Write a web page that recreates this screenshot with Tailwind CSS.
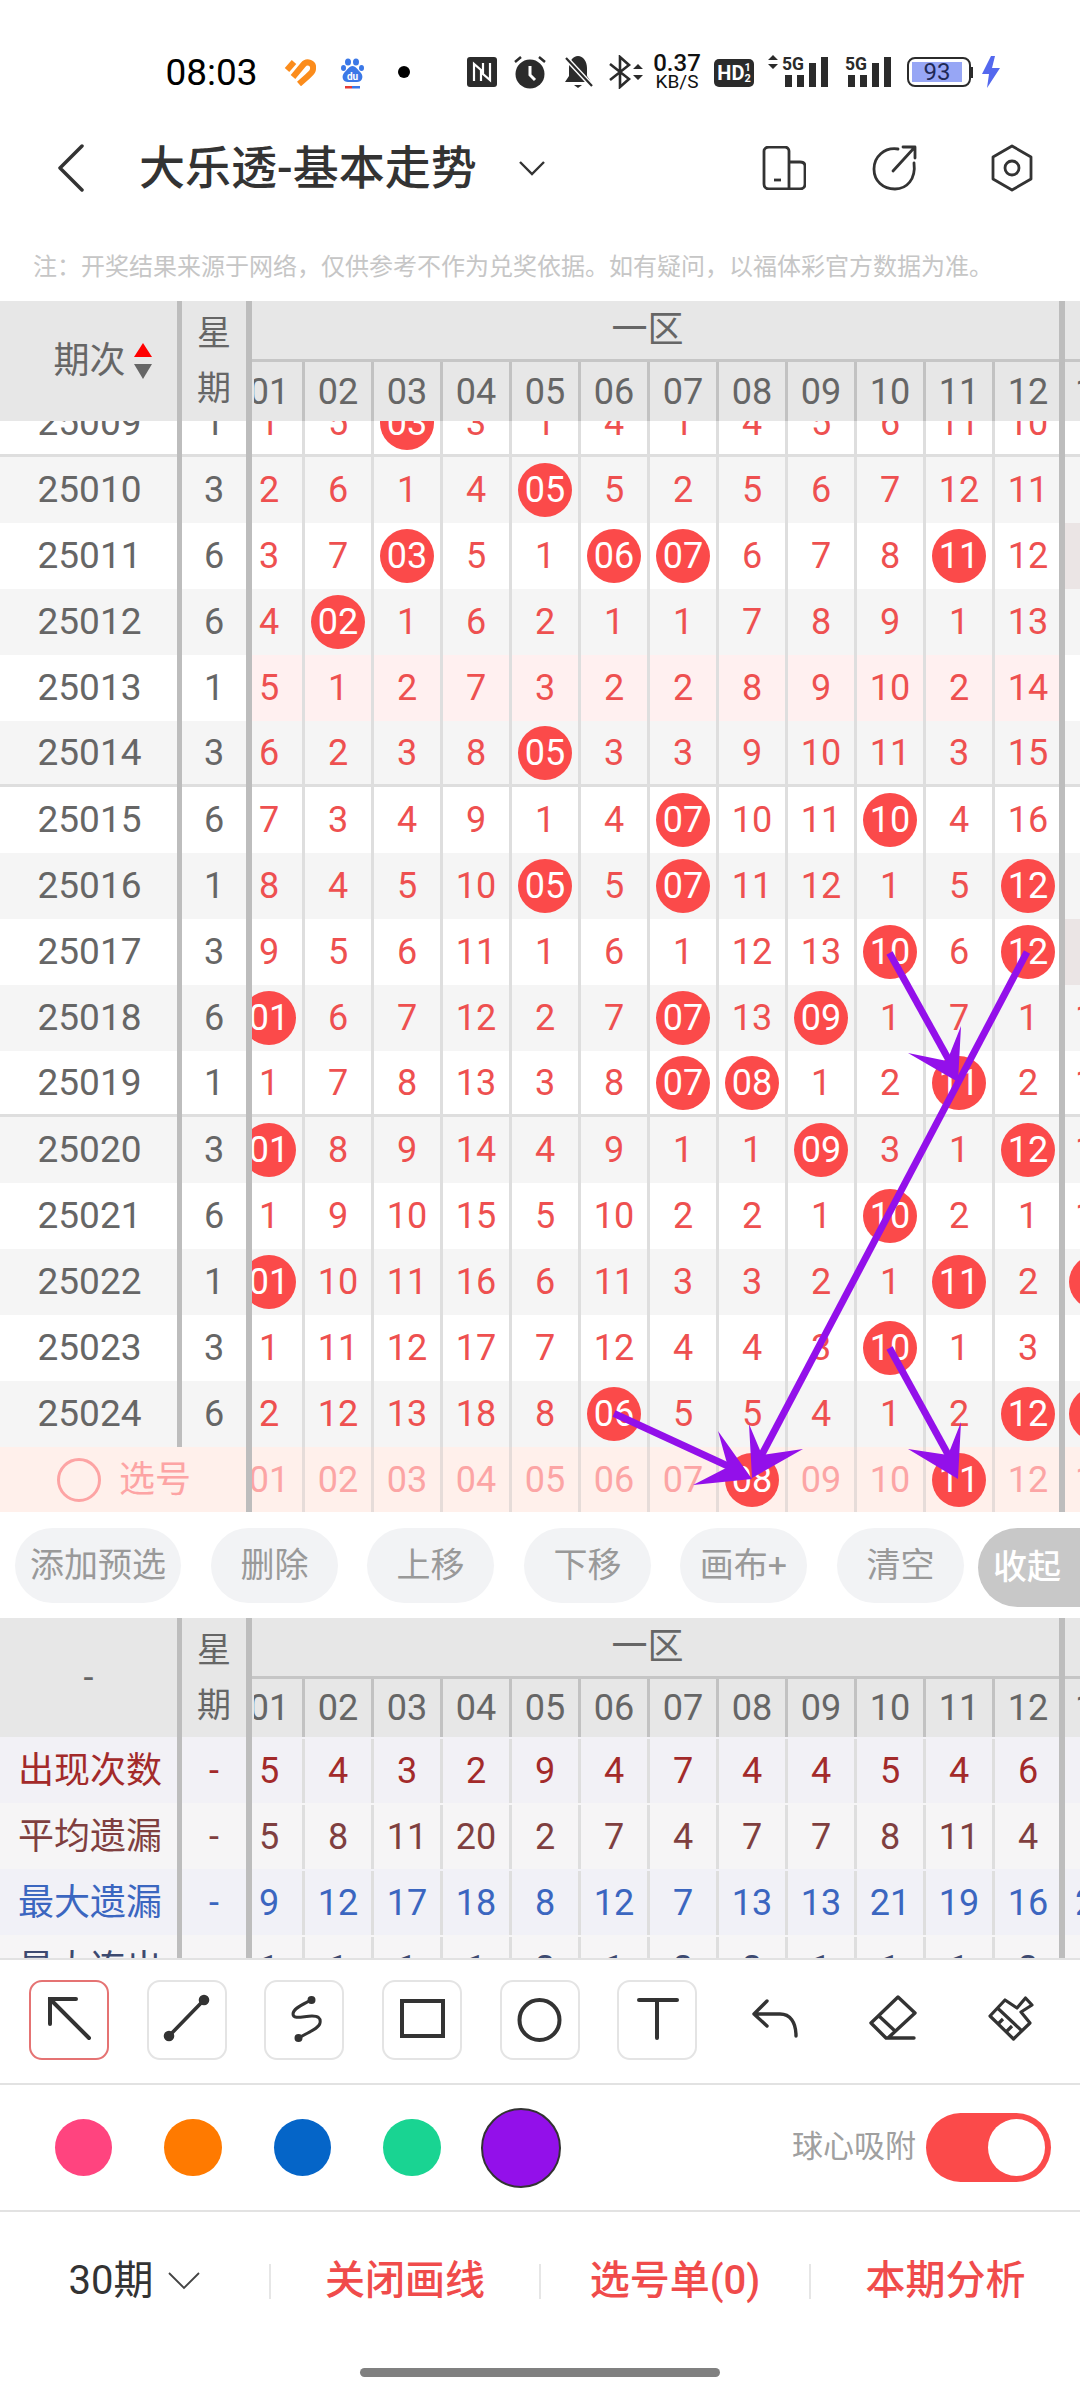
<!DOCTYPE html>
<html lang="zh-CN">
<head>
    <meta charset="UTF-8">
    <meta name="viewport" content="width=device-width, initial-scale=1.0">
    <title>大乐透-基本走势</title>
    <script src="https://cdn.jsdelivr.net/npm/@tailwindcss/browser@4"></script>
</head>
<body class="bg-white">
<div class="relative w-[1080px] h-[2400px] overflow-hidden bg-white text-[#666] text-[36px] [font-family:Roboto,'Noto_Sans_CJK_SC',sans-serif]">

    <!-- status bar -->
    <div class="h-[110px] pt-[34px] pl-[165px] flex items-start text-black">
        <div class="w-[93px] h-[76px] flex items-center justify-center text-[37px] shrink-0"><span class="leading-none whitespace-nowrap">08:03</span></div>
        <svg class="ml-[26px] mt-[24px] shrink-0" width="32" height="28" viewBox="0 0 32 28" fill="none" stroke="#fb8c1c" stroke-width="6"><path d="M3 12 L10 4"/><path d="M9 19 L19 7 C23 2 30 5 29 11 C29 14 26 16 24 18 L15 26"/></svg>
        <svg class="ml-[25px] mt-[24px] shrink-0" width="23" height="31" viewBox="0 0 23 31"><g fill="#3b78e7"><ellipse cx="7" cy="4" rx="3" ry="3.6"/><ellipse cx="15" cy="4" rx="3" ry="3.6"/><ellipse cx="2.5" cy="10" rx="2.5" ry="3"/><ellipse cx="20.5" cy="10" rx="2.5" ry="3"/><path d="M11.5 8 C8 8 6 12 3 15 C0 19 2 24 7 24 H16 C21 24 23 19 20 15 C17 12 15 8 11.5 8Z"/></g><text x="11.5" y="22" text-anchor="middle" font-family="Roboto" font-size="10" font-weight="700" fill="#fff">du</text><rect x="4" y="28" width="7" height="2.5" fill="#e53935"/><rect x="11" y="28" width="8" height="2.5" fill="#3b78e7"/></svg>
        <div class="ml-[34px] mt-[32px] w-[12px] h-[12px] rounded-full bg-black shrink-0"></div>
        <svg class="ml-[57px] mt-[23px] shrink-0" width="30" height="30" viewBox="0 0 30 30"><rect width="30" height="30" rx="3" fill="#2b2b2b"/><path d="M7 24 V7 L14 13 V24 M23 6 V23 L16 17 V6" fill="none" stroke="#fff" stroke-width="2.2"/></svg>
        <svg class="ml-[17px] mt-[21px] shrink-0" width="32" height="34" viewBox="0 0 32 34"><circle cx="16" cy="19" r="14.5" fill="#2b2b2b"/><path d="M16 11 V20 L21 25" fill="none" stroke="#fff" stroke-width="3"/><path d="M1 7 L7 2 M31 7 L25 2" stroke="#2b2b2b" stroke-width="2.5"/></svg>
        <svg class="ml-[17px] mt-[21px] shrink-0" width="30" height="34" viewBox="0 0 30 34"><path d="M15 1 C20 1 24 6 24 13 V21 L28 27 H2 L6 21 V13 C6 6 10 1 15 1Z" fill="#2b2b2b"/><path d="M11 30 H19 L15 33Z" fill="#2b2b2b"/><path d="M3 3 L29 31" stroke="#fff" stroke-width="5"/><path d="M3 3 L29 31" stroke="#2b2b2b" stroke-width="2.2"/></svg>
        <svg class="ml-[16px] mt-[21px] shrink-0" width="34" height="34" viewBox="0 0 34 34" fill="none"><path d="M1 9 L20 24 L11 32 V2 L20 10 L1 25" stroke="#2b2b2b" stroke-width="2.6"/><path d="M24 14 L29 9 L34 14Z M24 20 H34 L29 25Z" fill="#2b2b2b"/></svg>
        <div class="ml-[9px] w-[50px] mt-[19px] flex flex-col items-center shrink-0 text-[#111]"><span class="text-[24px] font-medium leading-[20px]">0.37</span><span class="text-[19px] leading-[17px] whitespace-nowrap">KB/S</span></div>
        <div class="ml-[12px] mt-[25px] w-[40px] h-[28px] rounded-[5px] bg-[#2b2b2b] text-white flex items-center justify-center shrink-0"><span class="text-[20px] font-bold leading-none">HD</span><span class="flex flex-col text-[11px] font-bold leading-[11px]"><span>1</span><span>2</span></span></div>
        <svg class="ml-[14px] mt-[20px] shrink-0" width="60" height="34" viewBox="0 0 60 34" fill="#2b2b2b"><path d="M0 6 L5 1 L10 6Z M0 10 H10 L5 15Z"/><text x="14" y="16" font-family="Roboto" font-size="19" font-weight="700" textLength="22" lengthAdjust="spacingAndGlyphs">5G</text><rect x="17" y="21" width="7" height="12"/><rect x="29" y="21" width="7" height="12"/><rect x="41" y="9" width="7" height="24"/><rect x="53" y="3" width="7" height="30"/></svg>
        <svg class="ml-[17px] mt-[20px] shrink-0" width="46" height="34" viewBox="0 0 46 34" fill="#2b2b2b"><text x="0" y="16" font-family="Roboto" font-size="19" font-weight="700" textLength="22" lengthAdjust="spacingAndGlyphs">5G</text><rect x="3" y="21" width="7" height="12"/><rect x="15" y="21" width="7" height="12"/><rect x="27" y="9" width="7" height="24"/><rect x="39" y="3" width="7" height="30"/></svg>
        <div class="ml-[16px] mt-[23px] w-[64px] h-[30px] border-[2px] border-[#2b2b2b] rounded-[8px] p-[3px] shrink-0"><div class="w-[50px] h-[20px] bg-[#97a6f5] text-[#1f2a55] text-[24px] leading-[20px] text-center">93</div></div>
        <div class="mt-[33px] w-[2px] h-[11px] bg-[#2b2b2b] shrink-0"></div>
        <svg class="ml-[9px] mt-[22px] shrink-0" width="18" height="32" viewBox="0 0 18 32"><path d="M9 0 L0 18 H7 L5 32 L18 12 H10 L13 0Z" fill="#5468ee"/></svg>
    </div>

    <!-- nav bar -->
    <div class="h-[116px] flex items-center text-[#333]">
        <svg class="ml-[56px] shrink-0" width="30" height="48" viewBox="0 0 30 48" fill="none"><path d="M26 2 L4 24 L26 46" stroke="#333" stroke-width="3.5" stroke-linecap="round" stroke-linejoin="round"/></svg>
        <span class="ml-[53px] w-[339px] shrink-0 text-[46px] font-medium leading-none whitespace-nowrap">大乐透-基本走势</span>
        <svg class="ml-[40px] shrink-0" width="28" height="16" viewBox="0 0 28 16" fill="none"><path d="M2 2 L14 14 L26 2" stroke="#333" stroke-width="2.4"/></svg>
        <svg class="ml-[216px] shrink-0" width="44" height="44" viewBox="0 0 44 44" fill="none" stroke="#333" stroke-width="2.8" stroke-linejoin="round"><path d="M27 16 V5 C27 3 25 1 23 1 H7 C4 1 2 3 2 5 V38 C2 41 4 43 7 43 H38 C41 43 43 41 43 38 V20 C43 17 41 16 38 16 H27 V43"/><path d="M12 34 H19"/></svg>
        <svg class="ml-[66px] shrink-0" width="46" height="46" viewBox="0 0 46 46" fill="none" stroke="#333" stroke-width="2.8" stroke-linecap="round" stroke-linejoin="round"><path d="M26 4 C12 2 2 12 2 24 C2 36 11 44 23 44 C35 44 44 34 42 18"/><path d="M21 26 L42 3 M31 2 H43 V13"/></svg>
        <svg class="ml-[72px] shrink-0" width="44" height="48" viewBox="0 0 44 48" fill="none" stroke="#333" stroke-width="2.8" stroke-linejoin="round"><path d="M22 2 L41 13 V35 L22 46 L3 35 V13Z"/><circle cx="22" cy="24" r="7"/></svg>
    </div>

    <!-- notice -->
    <div class="h-[75px] pl-[33px] pt-[24px] text-[24px] leading-[34px] text-[#c6c6c6] whitespace-nowrap">注&#xFF1A;开奖结果来源于网络&#xFF0C;仅供参考不作为兑奖依据。如有疑问&#xFF0C;以福体彩官方数据为准。</div>

    <div id="table1"></div>

    <!-- action buttons -->
    <div class="h-[106px] pt-[16px] pl-[15px] flex items-start text-[34px] text-[#999] whitespace-nowrap">
        <div class="w-[166px] h-[75px] rounded-full bg-[#f2f3f5] flex items-center justify-center shrink-0">添加预选</div>
        <div class="ml-[30px] w-[127px] h-[75px] rounded-full bg-[#f2f3f5] flex items-center justify-center shrink-0">删除</div>
        <div class="ml-[29px] w-[127px] h-[75px] rounded-full bg-[#f2f3f5] flex items-center justify-center shrink-0">上移</div>
        <div class="ml-[30px] w-[127px] h-[75px] rounded-full bg-[#f2f3f5] flex items-center justify-center shrink-0">下移</div>
        <div class="ml-[29px] w-[127px] h-[75px] rounded-full bg-[#f2f3f5] flex items-center justify-center shrink-0">画布+</div>
        <div class="ml-[30px] w-[127px] h-[75px] rounded-full bg-[#f2f3f5] flex items-center justify-center shrink-0">清空</div>
        <div class="ml-[14px] w-[130px] h-[79px] rounded-l-full bg-[#c8c8c8] text-white font-medium text-[34px] pl-[15px] flex items-center shrink-0">收起</div>
    </div>

    <div id="table2"></div>

    <!-- drawing tools -->
    <div class="h-[125px] pt-[20px] pl-[29px] flex items-start border-t-[2px] border-[#e2e2e2]">
        <svg class="shrink-0" width="80" height="80" viewBox="0 0 80 80" fill="none" stroke="#333" stroke-width="4" stroke-linecap="round"><rect x="1" y="1" width="78" height="78" rx="12" stroke="#e57373" stroke-width="2"/><path d="M21 44 V19 H47 M21 19 L60 58"/></svg>
        <svg class="ml-[38px] shrink-0" width="80" height="80" viewBox="0 0 80 80" fill="none" stroke="#333" stroke-width="3.600" stroke-linecap="round"><rect x="1" y="1" width="78" height="78" rx="12" stroke="#e4e4e4" stroke-width="2"/><path d="M22 56 L57 20"/><circle cx="22" cy="56" r="3.500" fill="#333"/><circle cx="57" cy="20" r="3.500" fill="#333"/></svg>
        <svg class="ml-[37px] shrink-0" width="80" height="80" viewBox="0 0 80 80" fill="none" stroke="#333" stroke-width="3" stroke-linecap="round"><rect x="1" y="1" width="78" height="78" rx="12" stroke="#e4e4e4" stroke-width="2"/><path d="M47 20 C40 24 29 28 29 34 C29 40 40 36 48 36 C54 36 57 38 56 43 C55 49 42 53 35 58"/><circle cx="47.500" cy="20" r="2.500" fill="#333"/><circle cx="34.500" cy="58" r="2.500" fill="#333"/></svg>
        <svg class="ml-[38px] shrink-0" width="80" height="80" viewBox="0 0 80 80" fill="none" stroke="#333" stroke-width="4"><rect x="1" y="1" width="78" height="78" rx="12" stroke="#e4e4e4" stroke-width="2"/><rect x="20" y="21" width="41" height="35"/></svg>
        <svg class="ml-[38px] shrink-0" width="80" height="80" viewBox="0 0 80 80" fill="none" stroke="#333" stroke-width="4"><rect x="1" y="1" width="78" height="78" rx="12" stroke="#e4e4e4" stroke-width="2"/><circle cx="39.500" cy="40" r="20"/></svg>
        <svg class="ml-[37px] shrink-0" width="80" height="80" viewBox="0 0 80 80" fill="none" stroke="#333" stroke-width="4" stroke-linecap="round"><rect x="1" y="1" width="78" height="78" rx="12" stroke="#e4e4e4" stroke-width="2"/><line x1="22" y1="20" x2="60" y2="20"/><line x1="40" y1="20" x2="40" y2="58"/></svg>
        <svg class="ml-[53px] mt-[16px] shrink-0" width="50" height="44" viewBox="0 0 50 44" fill="none" stroke="#333" stroke-width="3.400" stroke-linecap="round" stroke-linejoin="round"><path d="M17 5 L4 18 L17 30 M4 18 H30 C40 18 46 26 46 40"/></svg>
        <svg class="ml-[68px] mt-[14px] shrink-0" width="50" height="48" viewBox="0 0 50 48" fill="none" stroke="#333" stroke-width="3.400" stroke-linecap="round" stroke-linejoin="round"><path d="M30 3 L47 19 L20 44 H18 L3 29Z M11 22 L27 37 M18 44 H46"/></svg>
        <svg class="ml-[70px] mt-[15px] shrink-0" width="48" height="48" viewBox="0 0 48 48" fill="none" stroke="#333" stroke-width="3.200" stroke-linejoin="round"><path d="M17 5 L2 21 L25.500 44 L42 28 L33 17 L44 10 L37.500 3 L29 13Z M9.500 13 L34 36 M10 29 L15 24 M18 37 L24 31"/></svg>
    </div>

    <!-- colours -->
    <div class="h-[127px] pl-[55px] flex items-center border-t-[2px] border-[#e2e2e2]">
        <div class="w-[57px] h-[57px] rounded-full bg-[#ff447f] shrink-0"></div>
        <div class="ml-[52px] w-[58px] h-[57px] rounded-full bg-[#ff7a00] shrink-0"></div>
        <div class="ml-[52px] w-[57px] h-[57px] rounded-full bg-[#0565c8] shrink-0"></div>
        <div class="ml-[52px] w-[58px] h-[57px] rounded-full bg-[#19d492] shrink-0"></div>
        <div class="ml-[40px] w-[80px] h-[80px] rounded-full bg-[#9310ea] border-[2px] border-[#333] shrink-0"></div>
        <span class="ml-[231px] w-[126px] text-[31px] text-[#a0a0a0] whitespace-nowrap shrink-0">球心吸附</span>
        <div class="ml-[8px] w-[125px] h-[69px] rounded-full bg-[#fb4a4a] flex items-center justify-end pr-[6px] shrink-0"><div class="w-[57px] h-[57px] rounded-full bg-white"></div></div>
    </div>

    <!-- bottom bar -->
    <div class="h-[140px] flex items-center border-t-[2px] border-[#e2e2e2] text-[#f04b4b] text-[40px] font-medium whitespace-nowrap">
        <div class="w-[269px] flex items-center justify-center text-[#333] font-normal">30期
            <svg class="ml-[15px]" width="32" height="18" viewBox="0 0 32 18" fill="none"><path d="M1 1 L16 16 L31 1" stroke="#444" stroke-width="1.800"/></svg>
        </div>
        <div class="w-[2px] h-[35px] bg-[#e6e6e6]"></div>
        <div class="w-[268px] text-center">关闭画线</div>
        <div class="w-[2px] h-[35px] bg-[#e6e6e6]"></div>
        <div class="w-[268px] text-center">选号单(0)</div>
        <div class="w-[2px] h-[35px] bg-[#e6e6e6]"></div>
        <div class="w-[269px] text-center">本期分析</div>
    </div>
    <div class="mt-[18px] ml-[360px] w-[360px] h-[9px] rounded-full bg-[#808080]"></div>

    <!-- lines drawn on the chart -->
    <svg class="absolute left-0 top-0 pointer-events-none" width="1080" height="1530" viewBox="0 0 1080 1530" fill="none">
        <g stroke="#9310ea" stroke-width="7">
            <line x1="889.500" y1="953" x2="950" y2="1062"/>
            <line x1="1027" y1="952" x2="760" y2="1458"/>
            <line x1="889.500" y1="1348" x2="950" y2="1458"/>
            <line x1="614" y1="1413.500" x2="730" y2="1467"/>
        </g>
        <g fill="#9310ea">
            <polygon points="958,1082 961,1026 947,1061 908,1053"/>
            <polygon points="752,1478 749,1424 762,1455 803,1449"/>
            <polygon points="958,1479 961,1422 948,1455 908,1449"/>
            <polygon points="752,1479 718,1431 728,1467 693,1485"/>
        </g>
    </svg>
</div>

<script>
    // period, weekday, twelve cells ('*' marks a drawn ball), 13th column stub
    const rows = [
        ['25009','1',['1','5','*03','3','1','4','1','4','5','6','11','10'],''],
        ['25010','3',['2','6','1','4','*05','5','2','5','6','7','12','11'],''],
        ['25011','6',['3','7','*03','5','1','*06','*07','6','7','8','*11','12'],''],
        ['25012','6',['4','*02','1','6','2','1','1','7','8','9','1','13'],''],
        ['25013','1',['5','1','2','7','3','2','2','8','9','10','2','14'],''],
        ['25014','3',['6','2','3','8','*05','3','3','9','10','11','3','15'],''],
        ['25015','6',['7','3','4','9','1','4','*07','10','11','*10','4','16'],''],
        ['25016','1',['8','4','5','10','*05','5','*07','11','12','1','5','*12'],''],
        ['25017','3',['9','5','6','11','1','6','1','12','13','*10','6','*12'],''],
        ['25018','6',['*01','6','7','12','2','7','*07','13','*09','1','7','1'],'1'],
        ['25019','1',['1','7','8','13','3','8','*07','*08','1','2','*11','2'],'1'],
        ['25020','3',['*01','8','9','14','4','9','1','1','*09','3','1','*12'],'1'],
        ['25021','6',['1','9','10','15','5','10','2','2','1','*10','2','1'],'1'],
        ['25022','1',['*01','10','11','16','6','11','3','3','2','1','*11','2'],'*'],
        ['25023','3',['1','11','12','17','7','12','4','4','3','*10','1','3'],''],
        ['25024','6',['2','12','13','18','8','*06','5','5','4','1','2','*12'],'*']
    ];
    const names = ['01','02','03','04','05','06','07','08','09','10','11','12'];
    const sep = '<div class="w-[5px] bg-[#bdbdbd] shrink-0"></div>';
    const sep2 = '<div class="w-[6px] bg-[#bdbdbd] shrink-0"></div>';

    function cell(v, boxClass, textClass) {
        const body = v[0] === '*'
            ? `<span class="w-[54px] h-[54px] rounded-full bg-[#fb4a4a] text-white flex items-center justify-center">${v.slice(1)}</span>`
            : `<span class="${textClass}">${v}</span>`;
        return `<div class="w-[69px] shrink-0 flex items-center justify-center border-r-[3px] ${boxClass}">${body}</div>`;
    }

    function stub(v) {
        if (v === '*') return '<span class="ml-[4px] w-[54px] h-[54px] rounded-full bg-[#fb4a4a] shrink-0"></span>';
        return v ? `<span class="ml-[10px]">${v}</span>` : '';
    }

    function header(left) {
        return `
        <div class="h-[120px] flex bg-[#e7e7e7]">
            <div class="w-[177px] shrink-0 flex items-center justify-center">${left}</div>${sep}
            <div class="w-[64px] shrink-0 flex flex-col items-center justify-center text-[34px] leading-[55px]"><span>星</span><span>期</span></div>${sep2}
            <div class="w-[807px] shrink-0 flex flex-col">
                <div class="h-[61px] pr-[16px] flex items-center justify-center border-b-[3px] border-[#c6c6c6]">一区</div>
                <div class="flex-1 overflow-hidden ml-[2px]"><div class="h-full flex ml-[-18px]">${names.map(n => cell(n, 'border-[#c2c2c2]', 'text-[#666]')).join('')}</div></div>
            </div>${sep2}
            <div class="flex-1 flex flex-col overflow-hidden">
                <div class="h-[61px] shrink-0 border-b-[3px] border-[#c6c6c6]"></div>
                <div class="flex-1 flex items-center whitespace-nowrap"><span class="ml-[10px]">13</span></div>
            </div>
        </div>`;
    }

    function dataRow(r, i) {
        const shade = i % 2 === 1;
        const line = i === 0 || i === 5 || i === 10;
        const rowBg = shade ? 'bg-[#f5f5f5]' : 'bg-white';
        const lineCls = line ? 'border-b-[3px] border-[#dedede]' : '';
        const numBg = r[0] === '25013' ? 'bg-[#fff0f0]' : '';
        const stubBg = (r[0] === '25011' || r[0] === '25017') ? 'bg-[#ebe5e5]' : '';
        return `
        <div class="h-[66px] flex ${rowBg} ${i === 0 ? 'mt-[-30px]' : ''}">
            <div class="w-[177px] shrink-0 flex items-center justify-center pl-[2px] text-[37px] ${lineCls}">${r[0]}</div>${sep}
            <div class="w-[64px] shrink-0 flex items-center justify-center ${lineCls}">${r[1]}</div>${sep2}
            <div class="w-[807px] shrink-0 overflow-hidden ${lineCls} ${numBg}"><div class="h-full flex ml-[-16px]">${r[2].map(v => cell(v, 'border-[#dedede]', 'text-[#ee5050]')).join('')}</div></div>${sep2}
            <div class="flex-1 flex items-center overflow-hidden whitespace-nowrap text-[#ee5050] ${lineCls} ${stubBg}">${stub(r[3])}</div>
        </div>`;
    }

    function pickRow() {
        const picked = { '08': 1, '11': 1 };
        return `
        <div class="h-[65px] flex bg-[#fff0eb]">
            <div class="w-[246px] shrink-0 flex items-center pl-[57px] text-[#fda4a4]"><span class="w-[44px] h-[44px] rounded-full border-[3px] border-[#fda4a4] shrink-0"></span><span class="ml-[18px]">选号</span></div>${sep2}
            <div class="w-[807px] shrink-0 overflow-hidden"><div class="h-full flex ml-[-16px]">${names.map(n => cell(picked[n] ? '*' + n : n, 'border-[#e6dcd9]', 'text-[#fca5a5]')).join('')}</div></div>${sep2}
            <div class="flex-1 flex items-center overflow-hidden text-[#fca5a5]"><span class="ml-[10px]">1</span></div>
        </div>`;
    }

    const stats = [
        ['出现次数', ['5','4','3','2','9','4','7','4','4','5','4','6'], 'text-[#a32a2a]', 'bg-[#f2f1f6]', ''],
        ['平均遗漏', ['5','8','11','20','2','7','4','7','7','8','11','4'], 'text-[#7f3f3f]', 'bg-[#f6f5f6]', ''],
        ['最大遗漏', ['9','12','17','18','8','12','7','13','13','21','19','16'], 'text-[#3b66c0]', 'bg-[#f1f1f7]', '2'],
        ['最大连出', ['1','1','1','1','2','1','2','2','1','1','1','2'], 'text-[#3d4a70]', 'bg-[#f6f5f6]', '']
    ];

    function statRow(s) {
        return `
        <div class="h-[66px] flex ${s[3]} ${s[2]}">
            <div class="w-[177px] shrink-0 flex items-center justify-center pl-[3px] pt-[2px] whitespace-nowrap">${s[0]}</div>${sep}
            <div class="w-[64px] shrink-0 flex items-center justify-center pt-[2px]">-</div>${sep2}
            <div class="w-[807px] shrink-0 overflow-hidden"><div class="h-full flex ml-[-16px] pt-[2px]">${s[1].map(v => cell(v, 'border-[#dedede]', '')).join('')}</div></div>${sep2}
            <div class="flex-1 flex items-center overflow-hidden whitespace-nowrap pt-[2px]">${stub(s[4])}</div>
        </div>`;
    }

    const sortIcon = `<svg class="ml-[8px]" width="18" height="36" viewBox="0 0 18 36"><path d="M9 0 L18 14 H0Z" fill="#f00"/><path d="M0 21 H18 L9 36Z" fill="#666"/></svg>`;

    document.getElementById('table1').innerHTML =
        header(`<span class="ml-[28px] whitespace-nowrap">期次</span>${sortIcon}`) +
        `<div class="h-[1026px] overflow-hidden">${rows.map(dataRow).join('')}</div>` +
        pickRow();

    document.getElementById('table2').innerHTML =
        header('<span>-</span>').replace('h-[120px]', 'h-[119px]') +
        `<div class="h-[221px] overflow-hidden">${stats.map(statRow).join('')}</div>`;
</script>
</body>
</html>
